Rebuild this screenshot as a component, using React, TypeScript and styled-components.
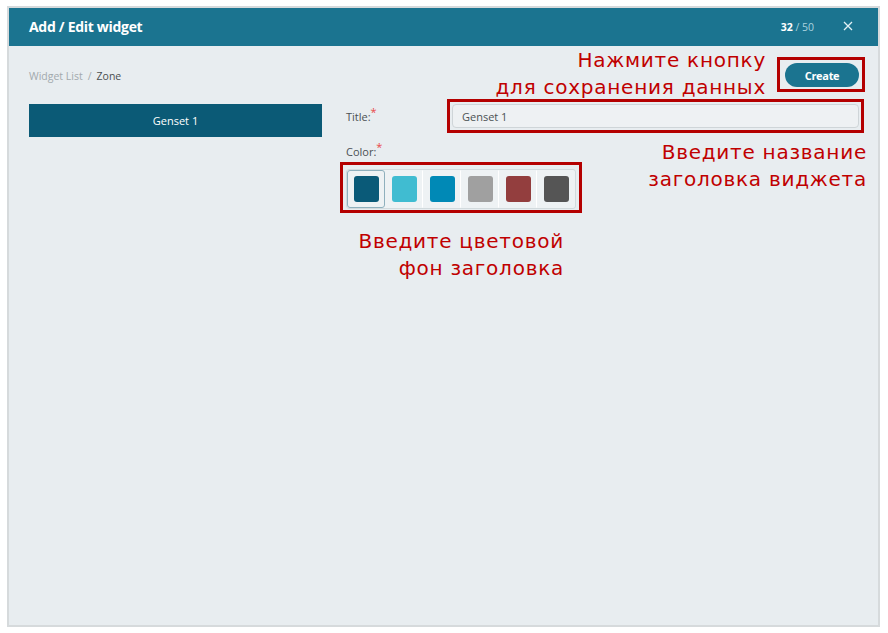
import React from 'react'
import styled, {createGlobalStyle} from 'styled-components'

const GlobalStyle = createGlobalStyle`
  html, body {
    margin: 0;
    padding: 0;
    background: #ffffff;
  }
  body {
    font-family: "Open Sans", "Noto Sans", sans-serif;
  }
`

const colors = {
    header: '#1b7490',
    body: '#e8edf0',
    dark: '#0b5a76',
    note: '#c00000',
    mark: '#b40000',
}

const swatches = ['#0a5a78', '#40bcd1', '#0089b6', '#a0a0a0', '#933e3e', '#555555']

export default function App() {
    return (
        <>
            <GlobalStyle/>
            <Page>
                <Panel>
                    <Header>
                        <HeaderTitle>Add / Edit widget</HeaderTitle>
                        <HeaderRight>
                            <Counter><b>32</b> / 50</Counter>
                            <Close>
                                <svg width="10" height="10" viewBox="0 0 10 10">
                                    <path d="M1 1L9 9M9 1L1 9" stroke="#e3f1f5" strokeWidth="1.3" fill="none"/>
                                </svg>
                            </Close>
                        </HeaderRight>
                    </Header>
                    <Body>
                        <TopRow>
                            <Breadcrumb>
                                <Crumb>Widget List</Crumb>
                                <Sep>/</Sep>
                                <CrumbActive>Zone</CrumbActive>
                            </Breadcrumb>
                            <CreateButton>Create</CreateButton>
                        </TopRow>
                        <Content>
                            <Sidebar>
                                <ListItem>Genset 1</ListItem>
                            </Sidebar>
                            <Form>
                                <FieldRow>
                                    <Label>Title:<Star>*</Star></Label>
                                    <InputWrap>
                                        <TextInput defaultValue="Genset 1"/>
                                    </InputWrap>
                                </FieldRow>
                                <ColorField>
                                    <Label>Color:<Star>*</Star></Label>
                                    <SwatchStrip>
                                        {swatches.map((c, i) => (
                                            <SwatchCell key={c} selected={i === 0}>
                                                <Swatch color={c}/>
                                            </SwatchCell>
                                        ))}
                                    </SwatchStrip>
                                </ColorField>
                            </Form>
                        </Content>
                        <Note right={112} top={1}>Нажмите кнопку<br/>для сохранения данных</Note>
                        <Note right={11} top={93}>Введите название<br/>заголовка виджета</Note>
                        <Note right={314} top={182}>Введите цветовой<br/>фон заголовка</Note>
                    </Body>
                </Panel>
            </Page>
        </>
    )
}

const Page = styled.div`
  padding: 6px 7px;
  height: 633px;
  box-sizing: border-box;
`

const Panel = styled.div`
  width: 873px;
  height: 621px;
  box-sizing: border-box;
  border: 2px solid #d6dadc;
  background: ${colors.body};
  display: flex;
  flex-direction: column;
`

const Header = styled.div`
  height: 38px;
  flex-shrink: 0;
  background: ${colors.header};
  display: flex;
  align-items: center;
  justify-content: space-between;
  padding: 0 25px 0 20px;
  color: #fff;
`

const HeaderTitle = styled.div`
  font-size: 14px;
  font-weight: 700;
  letter-spacing: -0.3px;
  margin-top: -2px;
`

const HeaderRight = styled.div`
  display: flex;
  align-items: center;
  gap: 29px;
`

const Counter = styled.div`
  font-size: 10.5px;
  color: #a9d2df;

  b {
    color: #fff;
    font-weight: 700;
  }
`

const Close = styled.div`
  display: flex;
  align-items: center;
  margin-top: -2px;
`

const Body = styled.div`
  position: relative;
  flex: 1;
  padding: 17px 19px 0 20px;
`

const TopRow = styled.div`
  display: flex;
  align-items: center;
  justify-content: space-between;
  height: 24px;
`

const Breadcrumb = styled.div`
  display: flex;
  gap: 5px;
  font-size: 10.5px;
  padding-top: 1px;
`

const Crumb = styled.span`
  color: #a2a9ad;
`

const Sep = styled.span`
  color: #a2a9ad;
`

const CrumbActive = styled.span`
  color: #4a4f52;
`

const Marked = `
  position: relative;

  &::after {
    content: '';
    position: absolute;
    border: 3px solid ${colors.mark};
    pointer-events: none;
  }
`

const CreateButton = styled.button`
  ${Marked};
  width: 74px;
  height: 24px;
  border: none;
  border-radius: 12px;
  background: ${colors.header};
  color: #fff;
  font-family: inherit;
  font-size: 11px;
  font-weight: 700;
  letter-spacing: -0.3px;

  &::after {
    top: -6px;
    right: -6px;
    bottom: -5px;
    left: -8px;
  }
`

const Content = styled.div`
  display: flex;
  gap: 24px;
  margin-top: 17px;
`

const Sidebar = styled.div`
  width: 293px;
`

const ListItem = styled.div`
  height: 33px;
  background: ${colors.dark};
  color: #fff;
  font-size: 11px;
  display: flex;
  align-items: center;
  justify-content: center;
`

const Form = styled.div`
  flex: 1;
  display: flex;
  flex-direction: column;
`

const FieldRow = styled.div`
  display: flex;
  align-items: center;
`

const Label = styled.label`
  width: 106px;
  font-size: 11px;
  color: #4b5154;
`

const Star = styled.sup`
  color: #e84a4a;
  font-size: 11px;
  line-height: 0;
`

const InputWrap = styled.div`
  ${Marked};
  flex: 1;
  display: flex;

  &::after {
    inset: -5px;
  }
`

const TextInput = styled.input`
  flex: 1;
  height: 24px;
  box-sizing: border-box;
  border: 1px solid #cfd5d8;
  border-radius: 4px;
  background: #eef1f3;
  padding: 0 9px;
  font-family: inherit;
  font-size: 11px;
  color: #4b5154;
  outline: none;
`

const ColorField = styled.div`
  display: flex;
  flex-direction: column;
  gap: 10px;
  margin-top: 16px;
`

const SwatchStrip = styled.div`
  ${Marked};
  display: flex;
  align-self: flex-start;
  border: 1px solid #d2dadd;
  border-radius: 3px;
  background: #eef2f4;

  &::after {
    top: -8px;
    right: -7px;
    bottom: -5px;
    left: -7px;
  }
`

const SwatchCell = styled.div<{ selected: boolean }>`
  width: 38px;
  height: 38px;
  box-sizing: border-box;
  display: flex;
  align-items: center;
  justify-content: center;
  border: 1px solid ${({selected}) => selected ? '#8fb0bd' : 'transparent'};
  border-right: 1px solid ${({selected}) => selected ? '#8fb0bd' : '#ffffff'};
  border-radius: ${({selected}) => selected ? '3px' : '0'};

  &:last-child {
    border-right-color: transparent;
  }
`

const Swatch = styled.div<{ color: string }>`
  width: 25px;
  height: 26px;
  border-radius: 3px;
  background: ${({color}) => color};
`

const Note = styled.div<{ right: number, top: number }>`
  position: absolute;
  right: ${({right}) => right}px;
  top: ${({top}) => top}px;
  text-align: right;
  font-family: "DejaVu Sans", sans-serif;
  font-size: 20px;
  line-height: 27px;
  letter-spacing: 0.75px;
  color: ${colors.note};
  white-space: nowrap;
`
